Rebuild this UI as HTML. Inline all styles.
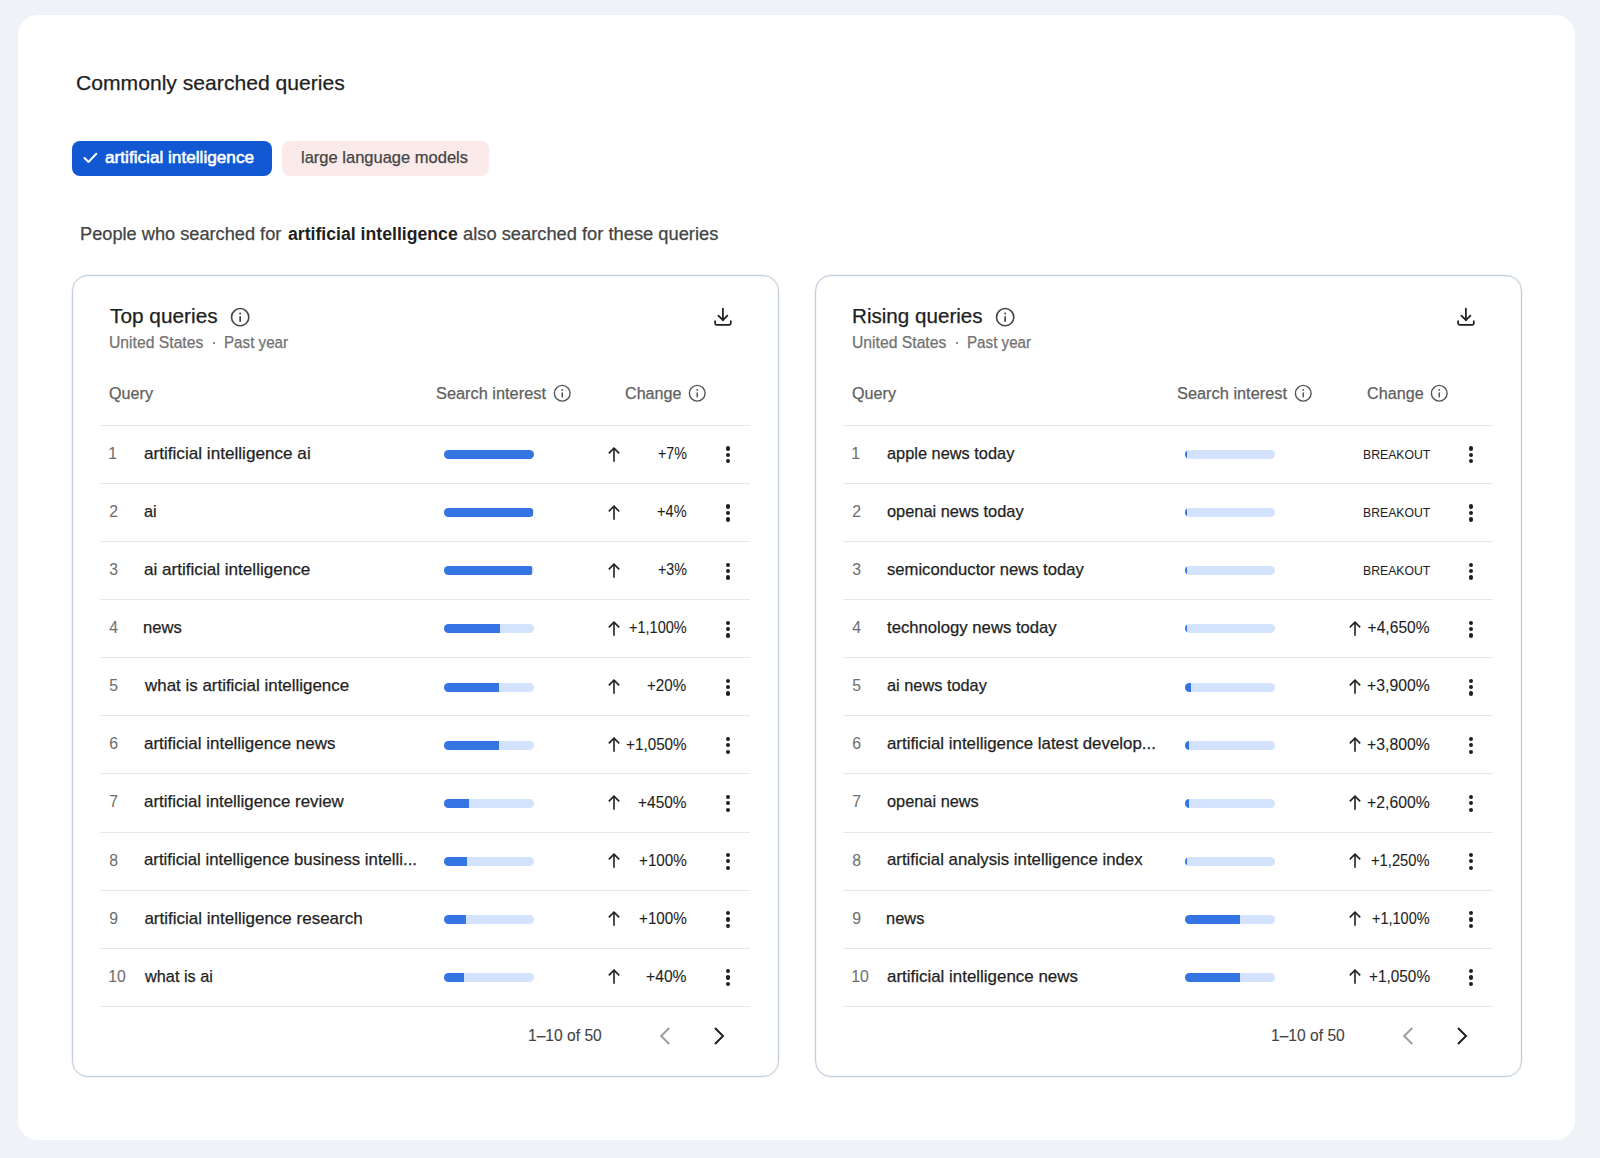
<!DOCTYPE html>
<html><head><meta charset="utf-8"><title>Commonly searched queries</title>
<style>
html,body{margin:0;padding:0;}
body{width:1600px;height:1158px;background:#eff2f7;position:relative;overflow:hidden;font-family:"Liberation Sans", sans-serif;}
.page{position:absolute;left:18px;top:15px;width:1557px;height:1125px;background:#fff;border-radius:20px;}
.t{position:absolute;white-space:nowrap;transform-origin:0 0;-webkit-text-stroke:0.25px currentColor;}
.ic{position:absolute;overflow:visible;}
.dot{position:absolute;width:4.3px;height:4.3px;border-radius:50%;}
.chip{position:absolute;border-radius:8px;}
.card{position:absolute;box-sizing:border-box;border:1px solid #c3cedc;border-radius:16px;box-shadow:0 0 0 0.5px rgba(200,210,223,0.45), inset 0 0 0 0.5px rgba(200,210,223,0.35);}
.div{position:absolute;height:1px;background:#e5e9ef;}
.bar{position:absolute;background:#d3e3fd;border-radius:5px;overflow:hidden;}
.fill{height:100%;background:#3574e3;}
</style></head><body>
<div class="page"></div>
<div class="t" style="left:75.59px;top:70.75px;font-size:21px;line-height:23.46px;color:#1f1f1f;font-weight:400;transform:scaleX(1.0057);">Commonly searched queries</div>
<div class="chip" style="left:72px;top:141px;width:200px;height:35px;background:#1158d2"></div>
<svg class="ic" style="left:0;top:0;width:1600px;height:1158px" viewBox="0 0 1600 1158"><path d="M84.5 158.0 L88.6 161.9 L96.3 153.8" fill="none" stroke="#fff" stroke-width="2.1" stroke-linecap="round" stroke-linejoin="round"/></svg>
<div class="t" style="left:105.40px;top:148.37px;font-size:16.5px;line-height:18.43px;color:#ffffff;font-weight:400;transform:scaleX(1.0420);-webkit-text-stroke:0.55px #fff;">artificial intelligence</div>
<div class="chip" style="left:282px;top:141px;width:207px;height:35px;background:#fbeaea"></div>
<div class="t" style="left:301.49px;top:148.06px;font-size:16.4px;line-height:18.32px;color:#444;font-weight:400;transform:scaleX(1.0070);">large language models</div>
<div class="t" style="left:80.36px;top:224.96px;font-size:17.5px;line-height:19.55px;color:#444;font-weight:400;transform:scaleX(1.0401);">People who searched for</div>
<div class="t" style="-webkit-text-stroke:0;left:287.50px;top:224.96px;font-size:17.5px;line-height:19.55px;color:#1f1f1f;font-weight:700;transform:scaleX(1.0088);">artificial intelligence</div>
<div class="t" style="left:463.10px;top:224.96px;font-size:17.5px;line-height:19.55px;color:#444;font-weight:400;transform:scaleX(1.0457);">also searched for these queries</div>
<div class="card" style="left:72px;top:275px;width:707px;height:802px"></div>
<div class="t" style="left:109.75px;top:304.73px;font-size:20.3px;line-height:22.68px;color:#1f1f1f;font-weight:400;transform:scaleX(1.0266);">Top queries</div>
<svg class="ic" style="left:229.84px;top:306.64px;width:20.32px;height:20.32px" viewBox="0 0 20 20"><circle cx="10" cy="10" r="8.5" fill="none" stroke="#444746" stroke-width="1.6"/><path d="M10 9.8 V13.9" stroke="#444746" stroke-width="1.65" stroke-linecap="round"/><circle cx="10" cy="6.4" r="1.0" fill="#444746"/></svg>
<div class="t" style="left:108.77px;top:333.82px;font-size:16px;line-height:17.87px;color:#727272;font-weight:400;transform:scaleX(0.9821);">United States</div>
<div class="dot" style="left:212.50px;top:342.10px;width:2.2px;height:2.2px;background:#6a6a6a"></div>
<div class="t" style="left:224.05px;top:333.82px;font-size:16px;line-height:17.87px;color:#727272;font-weight:400;transform:scaleX(0.9478);">Past year</div>
<svg class="ic" style="left:713.20px;top:306.60px;width:20px;height:20px" viewBox="0 0 20 20"><g fill="none" stroke="#1f1f1f" stroke-width="1.75" stroke-linecap="round" stroke-linejoin="round"><path d="M9.9 1.7 V13.0"/><path d="M5.4 8.6 L9.9 13.2 L14.4 8.6"/><path d="M2.1 14.2 V16.3 Q2.1 17.8 3.6 17.8 H16.3 Q17.8 17.8 17.8 16.3 V14.2"/></g></svg>
<div class="t" style="left:109.40px;top:383.85px;font-size:16.3px;line-height:18.21px;color:#606060;font-weight:400;transform:scaleX(0.9912);">Query</div>
<div class="t" style="left:436.05px;top:383.85px;font-size:16.3px;line-height:18.21px;color:#606060;font-weight:400;transform:scaleX(1.0043);">Search interest</div>
<svg class="ic" style="left:553.45px;top:383.85px;width:18.49px;height:18.49px" viewBox="0 0 20 20"><circle cx="10" cy="10" r="8.5" fill="none" stroke="#555" stroke-width="1.5"/><path d="M10 9.8 V13.9" stroke="#555" stroke-width="1.65" stroke-linecap="round"/><circle cx="10" cy="6.4" r="1.0" fill="#555"/></svg>
<div class="t" style="left:624.70px;top:383.85px;font-size:16.3px;line-height:18.21px;color:#606060;font-weight:400;transform:scaleX(0.9890);">Change</div>
<svg class="ic" style="left:688.25px;top:383.85px;width:18.49px;height:18.49px" viewBox="0 0 20 20"><circle cx="10" cy="10" r="8.5" fill="none" stroke="#555" stroke-width="1.5"/><path d="M10 9.8 V13.9" stroke="#555" stroke-width="1.65" stroke-linecap="round"/><circle cx="10" cy="6.4" r="1.0" fill="#555"/></svg>
<div class="div" style="left:100px;top:425px;width:650px"></div>
<div class="div" style="left:100px;top:483px;width:650px"></div>
<div class="div" style="left:100px;top:541px;width:650px"></div>
<div class="div" style="left:100px;top:599px;width:650px"></div>
<div class="div" style="left:100px;top:657px;width:650px"></div>
<div class="div" style="left:100px;top:715px;width:650px"></div>
<div class="div" style="left:100px;top:773px;width:650px"></div>
<div class="div" style="left:100px;top:832px;width:650px"></div>
<div class="div" style="left:100px;top:890px;width:650px"></div>
<div class="div" style="left:100px;top:948px;width:650px"></div>
<div class="div" style="left:100px;top:1006px;width:650px"></div>
<div class="t" style="left:108.25px;top:444.94px;font-size:15.8px;line-height:17.65px;color:#6e6e6e;font-weight:400;-webkit-text-stroke:0.05px #6e6e6e;">1</div>
<div class="t" style="left:144.40px;top:443.86px;font-size:17px;line-height:18.99px;color:#1f1f1f;font-weight:400;transform:scaleX(1.0080);">artificial intelligence ai</div>
<div class="bar" style="left:444.40px;top:450.24px;width:89.5px;height:9px"><div class="fill" style="width:89.50px"></div></div>
<svg class="ic" style="left:607.80px;top:446.54px;width:12px;height:15px" viewBox="0 0 12 15"><g fill="none" stroke="#1f1f1f" stroke-width="1.6"><path d="M6 1.2 V14.8"/><path d="M0.8 6.4 L6 1.2 L11.2 6.4"/></g></svg>
<div class="t" style="left:657.70px;top:445.12px;font-size:15.6px;line-height:17.43px;color:#1f1f1f;font-weight:400;transform:scaleX(0.9157);-webkit-text-stroke:0.1px #1f1f1f;">+7%</div>
<div class="dot" style="left:725.50px;top:446.34px;background:#1f1f1f"></div><div class="dot" style="left:725.50px;top:452.64px;background:#1f1f1f"></div><div class="dot" style="left:725.50px;top:459.14px;background:#1f1f1f"></div>
<div class="t" style="left:109.25px;top:503.02px;font-size:15.8px;line-height:17.65px;color:#6e6e6e;font-weight:400;-webkit-text-stroke:0.05px #6e6e6e;">2</div>
<div class="t" style="left:144.40px;top:501.94px;font-size:17px;line-height:18.99px;color:#1f1f1f;font-weight:400;transform:scaleX(0.9555);">ai</div>
<div class="bar" style="left:444.40px;top:508.32px;width:89.5px;height:9px"><div class="fill" style="width:89.05px"></div></div>
<svg class="ic" style="left:607.80px;top:504.62px;width:12px;height:15px" viewBox="0 0 12 15"><g fill="none" stroke="#1f1f1f" stroke-width="1.6"><path d="M6 1.2 V14.8"/><path d="M0.8 6.4 L6 1.2 L11.2 6.4"/></g></svg>
<div class="t" style="left:657.00px;top:503.20px;font-size:15.6px;line-height:17.43px;color:#1f1f1f;font-weight:400;transform:scaleX(0.9377);-webkit-text-stroke:0.1px #1f1f1f;">+4%</div>
<div class="dot" style="left:725.50px;top:504.42px;background:#1f1f1f"></div><div class="dot" style="left:725.50px;top:510.72px;background:#1f1f1f"></div><div class="dot" style="left:725.50px;top:517.22px;background:#1f1f1f"></div>
<div class="t" style="left:109.25px;top:561.10px;font-size:15.8px;line-height:17.65px;color:#6e6e6e;font-weight:400;-webkit-text-stroke:0.05px #6e6e6e;">3</div>
<div class="t" style="left:144.40px;top:560.02px;font-size:17px;line-height:18.99px;color:#1f1f1f;font-weight:400;transform:scaleX(1.0060);">ai artificial intelligence</div>
<div class="bar" style="left:444.40px;top:566.40px;width:89.5px;height:9px"><div class="fill" style="width:87.71px"></div></div>
<svg class="ic" style="left:607.80px;top:562.70px;width:12px;height:15px" viewBox="0 0 12 15"><g fill="none" stroke="#1f1f1f" stroke-width="1.6"><path d="M6 1.2 V14.8"/><path d="M0.8 6.4 L6 1.2 L11.2 6.4"/></g></svg>
<div class="t" style="left:657.70px;top:561.28px;font-size:15.6px;line-height:17.43px;color:#1f1f1f;font-weight:400;transform:scaleX(0.9157);-webkit-text-stroke:0.1px #1f1f1f;">+3%</div>
<div class="dot" style="left:725.50px;top:562.50px;background:#1f1f1f"></div><div class="dot" style="left:725.50px;top:568.80px;background:#1f1f1f"></div><div class="dot" style="left:725.50px;top:575.30px;background:#1f1f1f"></div>
<div class="t" style="left:109.25px;top:619.18px;font-size:15.8px;line-height:17.65px;color:#6e6e6e;font-weight:400;-webkit-text-stroke:0.05px #6e6e6e;">4</div>
<div class="t" style="left:143.42px;top:618.10px;font-size:17px;line-height:18.99px;color:#1f1f1f;font-weight:400;transform:scaleX(0.9794);">news</div>
<div class="bar" style="left:444.40px;top:624.48px;width:89.5px;height:9px"><div class="fill" style="width:55.49px"></div></div>
<svg class="ic" style="left:607.80px;top:620.78px;width:12px;height:15px" viewBox="0 0 12 15"><g fill="none" stroke="#1f1f1f" stroke-width="1.6"><path d="M6 1.2 V14.8"/><path d="M0.8 6.4 L6 1.2 L11.2 6.4"/></g></svg>
<div class="t" style="left:629.00px;top:619.36px;font-size:15.6px;line-height:17.43px;color:#1f1f1f;font-weight:400;transform:scaleX(0.9303);-webkit-text-stroke:0.1px #1f1f1f;">+1,100%</div>
<div class="dot" style="left:725.50px;top:620.58px;background:#1f1f1f"></div><div class="dot" style="left:725.50px;top:626.88px;background:#1f1f1f"></div><div class="dot" style="left:725.50px;top:633.38px;background:#1f1f1f"></div>
<div class="t" style="left:109.25px;top:677.26px;font-size:15.8px;line-height:17.65px;color:#6e6e6e;font-weight:400;-webkit-text-stroke:0.05px #6e6e6e;">5</div>
<div class="t" style="left:145.40px;top:676.18px;font-size:17px;line-height:18.99px;color:#1f1f1f;font-weight:400;transform:scaleX(0.9957);">what is artificial intelligence</div>
<div class="bar" style="left:444.40px;top:682.56px;width:89.5px;height:9px"><div class="fill" style="width:54.59px"></div></div>
<svg class="ic" style="left:607.80px;top:678.86px;width:12px;height:15px" viewBox="0 0 12 15"><g fill="none" stroke="#1f1f1f" stroke-width="1.6"><path d="M6 1.2 V14.8"/><path d="M0.8 6.4 L6 1.2 L11.2 6.4"/></g></svg>
<div class="t" style="left:647.40px;top:677.44px;font-size:15.6px;line-height:17.43px;color:#1f1f1f;font-weight:400;transform:scaleX(0.9740);-webkit-text-stroke:0.1px #1f1f1f;">+20%</div>
<div class="dot" style="left:725.50px;top:678.66px;background:#1f1f1f"></div><div class="dot" style="left:725.50px;top:684.96px;background:#1f1f1f"></div><div class="dot" style="left:725.50px;top:691.46px;background:#1f1f1f"></div>
<div class="t" style="left:109.25px;top:735.34px;font-size:15.8px;line-height:17.65px;color:#6e6e6e;font-weight:400;-webkit-text-stroke:0.05px #6e6e6e;">6</div>
<div class="t" style="left:144.40px;top:734.26px;font-size:17px;line-height:18.99px;color:#1f1f1f;font-weight:400;transform:scaleX(0.9978);">artificial intelligence news</div>
<div class="bar" style="left:444.40px;top:740.64px;width:89.5px;height:9px"><div class="fill" style="width:54.59px"></div></div>
<svg class="ic" style="left:607.80px;top:736.94px;width:12px;height:15px" viewBox="0 0 12 15"><g fill="none" stroke="#1f1f1f" stroke-width="1.6"><path d="M6 1.2 V14.8"/><path d="M0.8 6.4 L6 1.2 L11.2 6.4"/></g></svg>
<div class="t" style="left:626.00px;top:735.52px;font-size:15.6px;line-height:17.43px;color:#1f1f1f;font-weight:400;transform:scaleX(0.9786);-webkit-text-stroke:0.1px #1f1f1f;">+1,050%</div>
<div class="dot" style="left:725.50px;top:736.74px;background:#1f1f1f"></div><div class="dot" style="left:725.50px;top:743.04px;background:#1f1f1f"></div><div class="dot" style="left:725.50px;top:749.54px;background:#1f1f1f"></div>
<div class="t" style="left:109.25px;top:793.42px;font-size:15.8px;line-height:17.65px;color:#6e6e6e;font-weight:400;-webkit-text-stroke:0.05px #6e6e6e;">7</div>
<div class="t" style="left:144.40px;top:792.34px;font-size:17px;line-height:18.99px;color:#1f1f1f;font-weight:400;transform:scaleX(0.9927);">artificial intelligence review</div>
<div class="bar" style="left:444.40px;top:798.72px;width:89.5px;height:9px"><div class="fill" style="width:24.70px"></div></div>
<svg class="ic" style="left:607.80px;top:795.02px;width:12px;height:15px" viewBox="0 0 12 15"><g fill="none" stroke="#1f1f1f" stroke-width="1.6"><path d="M6 1.2 V14.8"/><path d="M0.8 6.4 L6 1.2 L11.2 6.4"/></g></svg>
<div class="t" style="left:638.10px;top:793.60px;font-size:15.6px;line-height:17.43px;color:#1f1f1f;font-weight:400;transform:scaleX(0.9914);-webkit-text-stroke:0.1px #1f1f1f;">+450%</div>
<div class="dot" style="left:725.50px;top:794.82px;background:#1f1f1f"></div><div class="dot" style="left:725.50px;top:801.12px;background:#1f1f1f"></div><div class="dot" style="left:725.50px;top:807.62px;background:#1f1f1f"></div>
<div class="t" style="left:109.25px;top:851.50px;font-size:15.8px;line-height:17.65px;color:#6e6e6e;font-weight:400;-webkit-text-stroke:0.05px #6e6e6e;">8</div>
<div class="t" style="left:144.40px;top:850.41px;font-size:17px;line-height:18.99px;color:#1f1f1f;font-weight:400;transform:scaleX(0.9861);">artificial intelligence business intelli...</div>
<div class="bar" style="left:444.40px;top:856.80px;width:89.5px;height:9px"><div class="fill" style="width:23.00px"></div></div>
<svg class="ic" style="left:607.80px;top:853.10px;width:12px;height:15px" viewBox="0 0 12 15"><g fill="none" stroke="#1f1f1f" stroke-width="1.6"><path d="M6 1.2 V14.8"/><path d="M0.8 6.4 L6 1.2 L11.2 6.4"/></g></svg>
<div class="t" style="left:638.90px;top:851.68px;font-size:15.6px;line-height:17.43px;color:#1f1f1f;font-weight:400;transform:scaleX(0.9751);-webkit-text-stroke:0.1px #1f1f1f;">+100%</div>
<div class="dot" style="left:725.50px;top:852.90px;background:#1f1f1f"></div><div class="dot" style="left:725.50px;top:859.20px;background:#1f1f1f"></div><div class="dot" style="left:725.50px;top:865.70px;background:#1f1f1f"></div>
<div class="t" style="left:109.25px;top:909.58px;font-size:15.8px;line-height:17.65px;color:#6e6e6e;font-weight:400;-webkit-text-stroke:0.05px #6e6e6e;">9</div>
<div class="t" style="left:144.40px;top:908.50px;font-size:17px;line-height:18.99px;color:#1f1f1f;font-weight:400;">artificial intelligence research</div>
<div class="bar" style="left:444.40px;top:914.88px;width:89.5px;height:9px"><div class="fill" style="width:21.75px"></div></div>
<svg class="ic" style="left:607.80px;top:911.18px;width:12px;height:15px" viewBox="0 0 12 15"><g fill="none" stroke="#1f1f1f" stroke-width="1.6"><path d="M6 1.2 V14.8"/><path d="M0.8 6.4 L6 1.2 L11.2 6.4"/></g></svg>
<div class="t" style="left:638.90px;top:909.76px;font-size:15.6px;line-height:17.43px;color:#1f1f1f;font-weight:400;transform:scaleX(0.9751);-webkit-text-stroke:0.1px #1f1f1f;">+100%</div>
<div class="dot" style="left:725.50px;top:910.98px;background:#1f1f1f"></div><div class="dot" style="left:725.50px;top:917.28px;background:#1f1f1f"></div><div class="dot" style="left:725.50px;top:923.78px;background:#1f1f1f"></div>
<div class="t" style="left:108.25px;top:967.66px;font-size:15.8px;line-height:17.65px;color:#6e6e6e;font-weight:400;-webkit-text-stroke:0.05px #6e6e6e;">10</div>
<div class="t" style="left:145.36px;top:966.58px;font-size:17px;line-height:18.99px;color:#1f1f1f;font-weight:400;transform:scaleX(0.9594);">what is ai</div>
<div class="bar" style="left:444.40px;top:972.96px;width:89.5px;height:9px"><div class="fill" style="width:19.24px"></div></div>
<svg class="ic" style="left:607.80px;top:969.26px;width:12px;height:15px" viewBox="0 0 12 15"><g fill="none" stroke="#1f1f1f" stroke-width="1.6"><path d="M6 1.2 V14.8"/><path d="M0.8 6.4 L6 1.2 L11.2 6.4"/></g></svg>
<div class="t" style="left:646.10px;top:967.84px;font-size:15.6px;line-height:17.43px;color:#1f1f1f;font-weight:400;transform:scaleX(1.0061);-webkit-text-stroke:0.1px #1f1f1f;">+40%</div>
<div class="dot" style="left:725.50px;top:969.06px;background:#1f1f1f"></div><div class="dot" style="left:725.50px;top:975.36px;background:#1f1f1f"></div><div class="dot" style="left:725.50px;top:981.86px;background:#1f1f1f"></div>
<div class="t" style="left:527.91px;top:1027.20px;font-size:15.8px;line-height:17.65px;color:#444;font-weight:400;transform:scaleX(0.9881);-webkit-text-stroke:0.1px #444;">1–10 of 50</div>
<svg class="ic" style="left:0;top:0;width:1600px;height:1158px" viewBox="0 0 1600 1158"><path d="M669.20 1028.00 L661.20 1036.00 L669.20 1044.00" fill="none" stroke="#9e9e9e" stroke-width="2"/></svg>
<svg class="ic" style="left:0;top:0;width:1600px;height:1158px" viewBox="0 0 1600 1158"><path d="M715.00 1028.00 L723.00 1036.00 L715.00 1044.00" fill="none" stroke="#1f1f1f" stroke-width="2"/></svg>
<div class="card" style="left:815px;top:275px;width:707px;height:802px"></div>
<div class="t" style="left:851.73px;top:304.73px;font-size:20.3px;line-height:22.68px;color:#1f1f1f;font-weight:400;transform:scaleX(1.0163);">Rising queries</div>
<svg class="ic" style="left:994.64px;top:306.64px;width:20.32px;height:20.32px" viewBox="0 0 20 20"><circle cx="10" cy="10" r="8.5" fill="none" stroke="#444746" stroke-width="1.6"/><path d="M10 9.8 V13.9" stroke="#444746" stroke-width="1.65" stroke-linecap="round"/><circle cx="10" cy="6.4" r="1.0" fill="#444746"/></svg>
<div class="t" style="left:851.77px;top:333.82px;font-size:16px;line-height:17.87px;color:#727272;font-weight:400;transform:scaleX(0.9821);">United States</div>
<div class="dot" style="left:955.50px;top:342.10px;width:2.2px;height:2.2px;background:#6a6a6a"></div>
<div class="t" style="left:967.05px;top:333.82px;font-size:16px;line-height:17.87px;color:#727272;font-weight:400;transform:scaleX(0.9478);">Past year</div>
<svg class="ic" style="left:1456.20px;top:306.60px;width:20px;height:20px" viewBox="0 0 20 20"><g fill="none" stroke="#1f1f1f" stroke-width="1.75" stroke-linecap="round" stroke-linejoin="round"><path d="M9.9 1.7 V13.0"/><path d="M5.4 8.6 L9.9 13.2 L14.4 8.6"/><path d="M2.1 14.2 V16.3 Q2.1 17.8 3.6 17.8 H16.3 Q17.8 17.8 17.8 16.3 V14.2"/></g></svg>
<div class="t" style="left:852.40px;top:383.85px;font-size:16.3px;line-height:18.21px;color:#606060;font-weight:400;transform:scaleX(0.9912);">Query</div>
<div class="t" style="left:1176.60px;top:383.85px;font-size:16.3px;line-height:18.21px;color:#606060;font-weight:400;transform:scaleX(1.0048);">Search interest</div>
<svg class="ic" style="left:1293.95px;top:383.85px;width:18.49px;height:18.49px" viewBox="0 0 20 20"><circle cx="10" cy="10" r="8.5" fill="none" stroke="#555" stroke-width="1.5"/><path d="M10 9.8 V13.9" stroke="#555" stroke-width="1.65" stroke-linecap="round"/><circle cx="10" cy="6.4" r="1.0" fill="#555"/></svg>
<div class="t" style="left:1366.50px;top:383.85px;font-size:16.3px;line-height:18.21px;color:#606060;font-weight:400;transform:scaleX(0.9934);">Change</div>
<svg class="ic" style="left:1429.85px;top:383.85px;width:18.49px;height:18.49px" viewBox="0 0 20 20"><circle cx="10" cy="10" r="8.5" fill="none" stroke="#555" stroke-width="1.5"/><path d="M10 9.8 V13.9" stroke="#555" stroke-width="1.65" stroke-linecap="round"/><circle cx="10" cy="6.4" r="1.0" fill="#555"/></svg>
<div class="div" style="left:843px;top:425px;width:650px"></div>
<div class="div" style="left:843px;top:483px;width:650px"></div>
<div class="div" style="left:843px;top:541px;width:650px"></div>
<div class="div" style="left:843px;top:599px;width:650px"></div>
<div class="div" style="left:843px;top:657px;width:650px"></div>
<div class="div" style="left:843px;top:715px;width:650px"></div>
<div class="div" style="left:843px;top:773px;width:650px"></div>
<div class="div" style="left:843px;top:832px;width:650px"></div>
<div class="div" style="left:843px;top:890px;width:650px"></div>
<div class="div" style="left:843px;top:948px;width:650px"></div>
<div class="div" style="left:843px;top:1006px;width:650px"></div>
<div class="t" style="left:851.25px;top:444.94px;font-size:15.8px;line-height:17.65px;color:#6e6e6e;font-weight:400;-webkit-text-stroke:0.05px #6e6e6e;">1</div>
<div class="t" style="left:887.40px;top:443.86px;font-size:17px;line-height:18.99px;color:#1f1f1f;font-weight:400;transform:scaleX(0.9622);">apple news today</div>
<div class="bar" style="left:1185.00px;top:450.24px;width:89.5px;height:9px"><div class="fill" style="width:1.61px"></div></div>
<div class="t" style="left:1362.56px;top:448.28px;font-size:13px;line-height:14.52px;color:#1f1f1f;font-weight:400;transform:scaleX(0.9409);-webkit-text-stroke:0.05px #1f1f1f;">BREAKOUT</div>
<div class="dot" style="left:1468.50px;top:446.34px;background:#1f1f1f"></div><div class="dot" style="left:1468.50px;top:452.64px;background:#1f1f1f"></div><div class="dot" style="left:1468.50px;top:459.14px;background:#1f1f1f"></div>
<div class="t" style="left:852.25px;top:503.02px;font-size:15.8px;line-height:17.65px;color:#6e6e6e;font-weight:400;-webkit-text-stroke:0.05px #6e6e6e;">2</div>
<div class="t" style="left:887.40px;top:501.94px;font-size:17px;line-height:18.99px;color:#1f1f1f;font-weight:400;transform:scaleX(0.9637);">openai news today</div>
<div class="bar" style="left:1185.00px;top:508.32px;width:89.5px;height:9px"><div class="fill" style="width:1.61px"></div></div>
<div class="t" style="left:1362.56px;top:506.36px;font-size:13px;line-height:14.52px;color:#1f1f1f;font-weight:400;transform:scaleX(0.9409);-webkit-text-stroke:0.05px #1f1f1f;">BREAKOUT</div>
<div class="dot" style="left:1468.50px;top:504.42px;background:#1f1f1f"></div><div class="dot" style="left:1468.50px;top:510.72px;background:#1f1f1f"></div><div class="dot" style="left:1468.50px;top:517.22px;background:#1f1f1f"></div>
<div class="t" style="left:852.25px;top:561.10px;font-size:15.8px;line-height:17.65px;color:#6e6e6e;font-weight:400;-webkit-text-stroke:0.05px #6e6e6e;">3</div>
<div class="t" style="left:887.40px;top:560.02px;font-size:17px;line-height:18.99px;color:#1f1f1f;font-weight:400;transform:scaleX(0.9774);">semiconductor news today</div>
<div class="bar" style="left:1185.00px;top:566.40px;width:89.5px;height:9px"><div class="fill" style="width:1.61px"></div></div>
<div class="t" style="left:1362.56px;top:564.44px;font-size:13px;line-height:14.52px;color:#1f1f1f;font-weight:400;transform:scaleX(0.9409);-webkit-text-stroke:0.05px #1f1f1f;">BREAKOUT</div>
<div class="dot" style="left:1468.50px;top:562.50px;background:#1f1f1f"></div><div class="dot" style="left:1468.50px;top:568.80px;background:#1f1f1f"></div><div class="dot" style="left:1468.50px;top:575.30px;background:#1f1f1f"></div>
<div class="t" style="left:852.25px;top:619.18px;font-size:15.8px;line-height:17.65px;color:#6e6e6e;font-weight:400;-webkit-text-stroke:0.05px #6e6e6e;">4</div>
<div class="t" style="left:887.40px;top:618.10px;font-size:17px;line-height:18.99px;color:#1f1f1f;font-weight:400;transform:scaleX(0.9813);">technology news today</div>
<div class="bar" style="left:1185.00px;top:624.48px;width:89.5px;height:9px"><div class="fill" style="width:1.61px"></div></div>
<svg class="ic" style="left:1349.00px;top:620.78px;width:12px;height:15px" viewBox="0 0 12 15"><g fill="none" stroke="#1f1f1f" stroke-width="1.6"><path d="M6 1.2 V14.8"/><path d="M0.8 6.4 L6 1.2 L11.2 6.4"/></g></svg>
<div class="t" style="left:1367.60px;top:619.36px;font-size:15.6px;line-height:17.43px;color:#1f1f1f;font-weight:400;-webkit-text-stroke:0.1px #1f1f1f;">+4,650%</div>
<div class="dot" style="left:1468.50px;top:620.58px;background:#1f1f1f"></div><div class="dot" style="left:1468.50px;top:626.88px;background:#1f1f1f"></div><div class="dot" style="left:1468.50px;top:633.38px;background:#1f1f1f"></div>
<div class="t" style="left:852.25px;top:677.26px;font-size:15.8px;line-height:17.65px;color:#6e6e6e;font-weight:400;-webkit-text-stroke:0.05px #6e6e6e;">5</div>
<div class="t" style="left:887.40px;top:676.18px;font-size:17px;line-height:18.99px;color:#1f1f1f;font-weight:400;transform:scaleX(0.9603);">ai news today</div>
<div class="bar" style="left:1185.00px;top:682.56px;width:89.5px;height:9px"><div class="fill" style="width:5.82px"></div></div>
<svg class="ic" style="left:1349.00px;top:678.86px;width:12px;height:15px" viewBox="0 0 12 15"><g fill="none" stroke="#1f1f1f" stroke-width="1.6"><path d="M6 1.2 V14.8"/><path d="M0.8 6.4 L6 1.2 L11.2 6.4"/></g></svg>
<div class="t" style="left:1366.90px;top:677.44px;font-size:15.6px;line-height:17.43px;color:#1f1f1f;font-weight:400;transform:scaleX(1.0124);-webkit-text-stroke:0.1px #1f1f1f;">+3,900%</div>
<div class="dot" style="left:1468.50px;top:678.66px;background:#1f1f1f"></div><div class="dot" style="left:1468.50px;top:684.96px;background:#1f1f1f"></div><div class="dot" style="left:1468.50px;top:691.46px;background:#1f1f1f"></div>
<div class="t" style="left:852.25px;top:735.34px;font-size:15.8px;line-height:17.65px;color:#6e6e6e;font-weight:400;-webkit-text-stroke:0.05px #6e6e6e;">6</div>
<div class="t" style="left:887.40px;top:734.26px;font-size:17px;line-height:18.99px;color:#1f1f1f;font-weight:400;transform:scaleX(0.9912);">artificial intelligence latest develop...</div>
<div class="bar" style="left:1185.00px;top:740.64px;width:89.5px;height:9px"><div class="fill" style="width:3.85px"></div></div>
<svg class="ic" style="left:1349.00px;top:736.94px;width:12px;height:15px" viewBox="0 0 12 15"><g fill="none" stroke="#1f1f1f" stroke-width="1.6"><path d="M6 1.2 V14.8"/><path d="M0.8 6.4 L6 1.2 L11.2 6.4"/></g></svg>
<div class="t" style="left:1366.90px;top:735.52px;font-size:15.6px;line-height:17.43px;color:#1f1f1f;font-weight:400;transform:scaleX(1.0124);-webkit-text-stroke:0.1px #1f1f1f;">+3,800%</div>
<div class="dot" style="left:1468.50px;top:736.74px;background:#1f1f1f"></div><div class="dot" style="left:1468.50px;top:743.04px;background:#1f1f1f"></div><div class="dot" style="left:1468.50px;top:749.54px;background:#1f1f1f"></div>
<div class="t" style="left:852.25px;top:793.42px;font-size:15.8px;line-height:17.65px;color:#6e6e6e;font-weight:400;-webkit-text-stroke:0.05px #6e6e6e;">7</div>
<div class="t" style="left:887.40px;top:792.34px;font-size:17px;line-height:18.99px;color:#1f1f1f;font-weight:400;transform:scaleX(0.9615);">openai news</div>
<div class="bar" style="left:1185.00px;top:798.72px;width:89.5px;height:9px"><div class="fill" style="width:3.85px"></div></div>
<svg class="ic" style="left:1349.00px;top:795.02px;width:12px;height:15px" viewBox="0 0 12 15"><g fill="none" stroke="#1f1f1f" stroke-width="1.6"><path d="M6 1.2 V14.8"/><path d="M0.8 6.4 L6 1.2 L11.2 6.4"/></g></svg>
<div class="t" style="left:1366.90px;top:793.60px;font-size:15.6px;line-height:17.43px;color:#1f1f1f;font-weight:400;transform:scaleX(1.0124);-webkit-text-stroke:0.1px #1f1f1f;">+2,600%</div>
<div class="dot" style="left:1468.50px;top:794.82px;background:#1f1f1f"></div><div class="dot" style="left:1468.50px;top:801.12px;background:#1f1f1f"></div><div class="dot" style="left:1468.50px;top:807.62px;background:#1f1f1f"></div>
<div class="t" style="left:852.25px;top:851.50px;font-size:15.8px;line-height:17.65px;color:#6e6e6e;font-weight:400;-webkit-text-stroke:0.05px #6e6e6e;">8</div>
<div class="t" style="left:887.40px;top:850.41px;font-size:17px;line-height:18.99px;color:#1f1f1f;font-weight:400;transform:scaleX(0.9872);">artificial analysis intelligence index</div>
<div class="bar" style="left:1185.00px;top:856.80px;width:89.5px;height:9px"><div class="fill" style="width:1.97px"></div></div>
<svg class="ic" style="left:1349.00px;top:853.10px;width:12px;height:15px" viewBox="0 0 12 15"><g fill="none" stroke="#1f1f1f" stroke-width="1.6"><path d="M6 1.2 V14.8"/><path d="M0.8 6.4 L6 1.2 L11.2 6.4"/></g></svg>
<div class="t" style="left:1371.10px;top:851.68px;font-size:15.6px;line-height:17.43px;color:#1f1f1f;font-weight:400;transform:scaleX(0.9448);-webkit-text-stroke:0.1px #1f1f1f;">+1,250%</div>
<div class="dot" style="left:1468.50px;top:852.90px;background:#1f1f1f"></div><div class="dot" style="left:1468.50px;top:859.20px;background:#1f1f1f"></div><div class="dot" style="left:1468.50px;top:865.70px;background:#1f1f1f"></div>
<div class="t" style="left:852.25px;top:909.58px;font-size:15.8px;line-height:17.65px;color:#6e6e6e;font-weight:400;-webkit-text-stroke:0.05px #6e6e6e;">9</div>
<div class="t" style="left:886.43px;top:908.50px;font-size:17px;line-height:18.99px;color:#1f1f1f;font-weight:400;transform:scaleX(0.9663);">news</div>
<div class="bar" style="left:1185.00px;top:914.88px;width:89.5px;height:9px"><div class="fill" style="width:55.49px"></div></div>
<svg class="ic" style="left:1349.00px;top:911.18px;width:12px;height:15px" viewBox="0 0 12 15"><g fill="none" stroke="#1f1f1f" stroke-width="1.6"><path d="M6 1.2 V14.8"/><path d="M0.8 6.4 L6 1.2 L11.2 6.4"/></g></svg>
<div class="t" style="left:1372.10px;top:909.76px;font-size:15.6px;line-height:17.43px;color:#1f1f1f;font-weight:400;transform:scaleX(0.9287);-webkit-text-stroke:0.1px #1f1f1f;">+1,100%</div>
<div class="dot" style="left:1468.50px;top:910.98px;background:#1f1f1f"></div><div class="dot" style="left:1468.50px;top:917.28px;background:#1f1f1f"></div><div class="dot" style="left:1468.50px;top:923.78px;background:#1f1f1f"></div>
<div class="t" style="left:851.25px;top:967.66px;font-size:15.8px;line-height:17.65px;color:#6e6e6e;font-weight:400;-webkit-text-stroke:0.05px #6e6e6e;">10</div>
<div class="t" style="left:887.40px;top:966.58px;font-size:17px;line-height:18.99px;color:#1f1f1f;font-weight:400;transform:scaleX(0.9952);">artificial intelligence news</div>
<div class="bar" style="left:1185.00px;top:972.96px;width:89.5px;height:9px"><div class="fill" style="width:54.59px"></div></div>
<svg class="ic" style="left:1349.00px;top:969.26px;width:12px;height:15px" viewBox="0 0 12 15"><g fill="none" stroke="#1f1f1f" stroke-width="1.6"><path d="M6 1.2 V14.8"/><path d="M0.8 6.4 L6 1.2 L11.2 6.4"/></g></svg>
<div class="t" style="left:1368.60px;top:967.84px;font-size:15.6px;line-height:17.43px;color:#1f1f1f;font-weight:400;transform:scaleX(0.9850);-webkit-text-stroke:0.1px #1f1f1f;">+1,050%</div>
<div class="dot" style="left:1468.50px;top:969.06px;background:#1f1f1f"></div><div class="dot" style="left:1468.50px;top:975.36px;background:#1f1f1f"></div><div class="dot" style="left:1468.50px;top:981.86px;background:#1f1f1f"></div>
<div class="t" style="left:1270.91px;top:1027.20px;font-size:15.8px;line-height:17.65px;color:#444;font-weight:400;transform:scaleX(0.9881);-webkit-text-stroke:0.1px #444;">1–10 of 50</div>
<svg class="ic" style="left:0;top:0;width:1600px;height:1158px" viewBox="0 0 1600 1158"><path d="M1412.20 1028.00 L1404.20 1036.00 L1412.20 1044.00" fill="none" stroke="#9e9e9e" stroke-width="2"/></svg>
<svg class="ic" style="left:0;top:0;width:1600px;height:1158px" viewBox="0 0 1600 1158"><path d="M1458.00 1028.00 L1466.00 1036.00 L1458.00 1044.00" fill="none" stroke="#1f1f1f" stroke-width="2"/></svg>
</body></html>
